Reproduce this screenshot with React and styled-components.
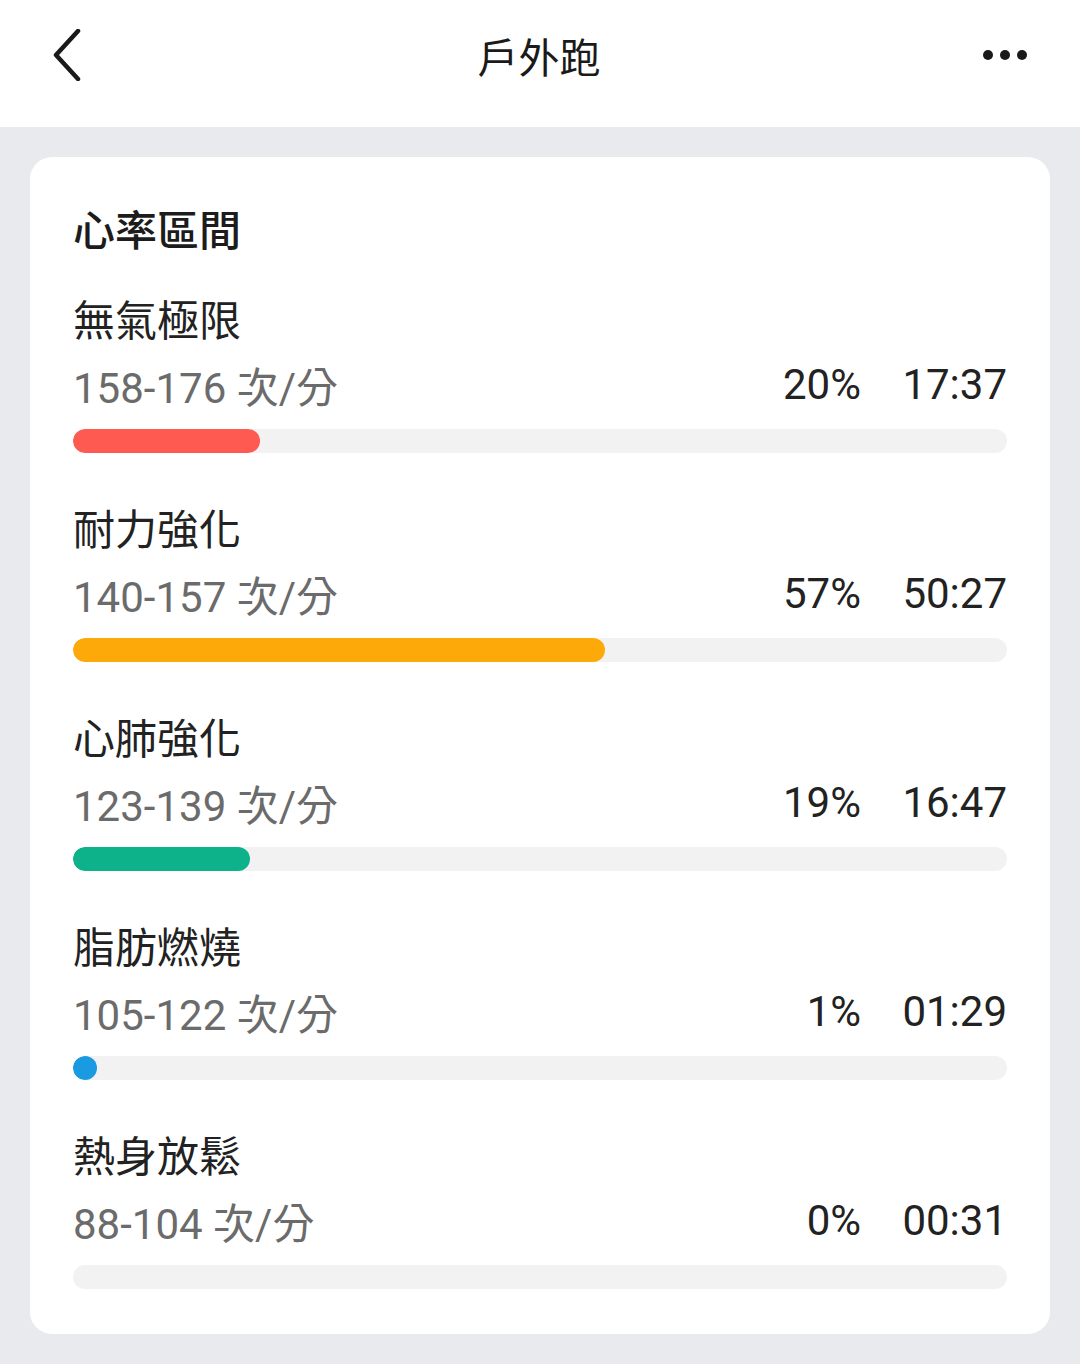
import React from 'react';
import styled, { createGlobalStyle } from 'styled-components';

const GlobalStyle = createGlobalStyle`
  html, body {
    margin: 0;
    padding: 0;
    background: #e9eaee;
    font-family: Roboto, "Noto Sans CJK TC", "Noto Sans", sans-serif;
  }
`;

const zones = [
  { name: '無氣極限', range: '158-176 次/分', pct: 20, time: '17:37', color: '#fe5a52' },
  { name: '耐力強化', range: '140-157 次/分', pct: 57, time: '50:27', color: '#fea90a' },
  { name: '心肺強化', range: '123-139 次/分', pct: 19, time: '16:47', color: '#0db18a' },
  { name: '脂肪燃燒', range: '105-122 次/分', pct: 1, time: '01:29', color: '#1a9ae0' },
  { name: '熱身放鬆', range: '88-104 次/分', pct: 0, time: '00:31', color: '#1a9ae0' },
];

// top bar
const Page = styled.div`
  width: 1080px;
  min-height: 1364px;
  background: #e9eaee;
`;

const Header = styled.header`
  height: 127px;
  background: #ffffff;
  display: flex;
  align-items: center;
  justify-content: space-between;
  padding: 0 52px 18px 50px;
  box-sizing: border-box;
`;

const IconBtn = styled.div`
  width: 56px;
  height: 56px;
  display: flex;
  align-items: center;
  justify-content: ${(p) => (p.right ? 'flex-end' : 'flex-start')};
`;

const HeaderTitle = styled.h1`
  margin: 0;
  font-size: 41px;
  font-weight: 400;
  color: #1a1a1a;
  font-family: "Noto Sans CJK TC", sans-serif;
`;

// card
const Card = styled.section`
  margin: 30px 30px 0 30px;
  background: #ffffff;
  border-radius: 22px;
  padding: 46px 43px 45px 43px;
`;

const CardTitle = styled.h2`
  margin: 0 0 40px 0;
  font-size: 42px;
  line-height: 50px;
  font-weight: 500;
  color: #1c1c1c;
  font-family: "Noto Sans CJK TC", sans-serif;
`;

const Zone = styled.div`
  display: flex;
  flex-direction: column;
  & + & {
    margin-top: 49px;
  }
`;

const ZoneName = styled.div`
  font-size: 42px;
  line-height: 50px;
  color: #222222;
  font-family: "Noto Sans CJK TC", sans-serif;
`;

const InfoRow = styled.div`
  display: flex;
  align-items: center;
  margin-top: 16px;
  height: 50px;
  font-size: 42px;
`;

const Range = styled.span`
  flex: 1;
  color: #6b6b6b;
`;

const Pct = styled.span`
  color: #222222;
  text-align: right;
`;

const Time = styled.span`
  color: #222222;
  width: 146px;
  text-align: right;
`;

const Track = styled.div`
  margin-top: 20px;
  height: 24px;
  border-radius: 12px;
  background: #f2f2f2;
  overflow: hidden;
`;

const Fill = styled.div`
  height: 100%;
  min-width: ${(p) => (p.$pct > 0 ? '24px' : '0')};
  border-radius: 12px;
  background: ${(p) => p.$color};
`;

export default function App() {
  return (
    <Page>
      <GlobalStyle />
      <Header>
        <IconBtn>
          <svg width="32" height="52" viewBox="0 0 32 52" fill="none">
            <path d="M28 2 L6 26 L28 50" stroke="#1a1a1a" strokeWidth="4.5" strokeLinecap="round" strokeLinejoin="round" />
          </svg>
        </IconBtn>
        <HeaderTitle>戶外跑</HeaderTitle>
        <IconBtn right>
          <svg width="46" height="12" viewBox="0 0 46 12">
            <circle cx="6" cy="6" r="5" fill="#1a1a1a" />
            <circle cx="23" cy="6" r="5" fill="#1a1a1a" />
            <circle cx="40" cy="6" r="5" fill="#1a1a1a" />
          </svg>
        </IconBtn>
      </Header>

      <Card>
        <CardTitle>心率區間</CardTitle>
        {zones.map((z) => (
          <Zone key={z.name}>
            <ZoneName>{z.name}</ZoneName>
            <InfoRow>
              <Range>{z.range}</Range>
              <Pct>{z.pct}%</Pct>
              <Time>{z.time}</Time>
            </InfoRow>
            <Track>
              <Fill $pct={z.pct} $color={z.color} style={{ width: `${z.pct}%` }} />
            </Track>
          </Zone>
        ))}
      </Card>
    </Page>
  );
}
